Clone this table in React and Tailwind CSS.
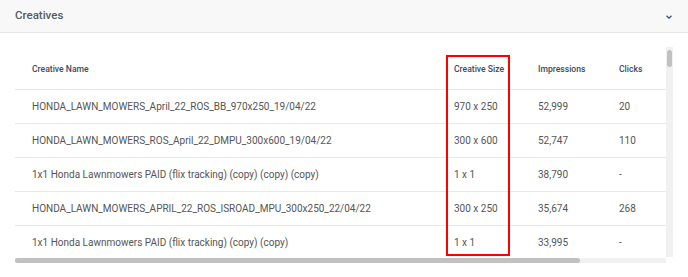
const rows = [
  { name: 'HONDA_LAWN_MOWERS_April_22_ROS_BB_970x250_19/04/22', size: '970 x 250', impressions: '52,999', clicks: '20' },
  { name: 'HONDA_LAWN_MOWERS_ROS_April_22_DMPU_300x600_19/04/22', size: '300 x 600', impressions: '52,747', clicks: '110' },
  { name: '1x1 Honda Lawnmowers PAID (flix tracking) (copy) (copy) (copy)', size: '1 x 1', impressions: '38,790', clicks: '-' },
  { name: 'HONDA_LAWN_MOWERS_APRIL_22_ROS_ISROAD_MPU_300x250_22/04/22', size: '300 x 250', impressions: '35,674', clicks: '268' },
  { name: '1x1 Honda Lawnmowers PAID (flix tracking) (copy) (copy)', size: '1 x 1', impressions: '33,995', clicks: '-' },
];

const App = () => {
  return (
    <div className="w-[688px] h-[277px] bg-white overflow-hidden font-['Roboto',sans-serif]">
      {/* Panel header */}
      <div className="h-[33px] bg-[#f8f8f8] border-b border-[#e6e6e6] flex items-center justify-between pl-[15px] pr-[16px]">
        <span className="text-[11.5px] font-medium text-[#555b63]">Creatives</span>
        <svg width="6" height="4" viewBox="0 0 6 4" className="mt-[1px]">
          <polyline points="0.5,0.8 3,3.2 5.5,0.8" fill="none" stroke="#3b4a7a" strokeWidth="1.2" />
        </svg>
      </div>

      <div className="pl-[15px] pt-[14px]">
        <div className="flex">
          <div className="w-[651px]">
            <div className="relative h-[210px] overflow-hidden">
              <div className="w-[750px]">
                <div className="h-[43px] flex items-center pt-[3px] border-b border-[#e8e8e8] text-[8.6px] font-medium text-[#3e4a5e]">
                  <div className="w-[439px] pl-[17px]">Creative Name</div>
                  <div className="w-[84px]">Creative Size</div>
                  <div className="w-[81px]">Impressions</div>
                  <div className="w-[146px]">Clicks</div>
                </div>
                {rows.map((r, i) => (
                  <div key={i} className="h-[34px] flex items-center border-b border-[#e8e8e8] text-[10px] text-[#555]">
                    <div className="w-[439px] pl-[17px] whitespace-nowrap">{r.name}</div>
                    <div className="w-[84px]">{r.size}</div>
                    <div className="w-[81px]">{r.impressions}</div>
                    <div className="w-[146px]">{r.clicks}</div>
                  </div>
                ))}
              </div>
              {/* highlight annotation */}
              <div className="absolute left-[431px] top-[8px] w-[64px] h-[201px] border-2 border-[#ff0000]" />
            </div>
            {/* horizontal scrollbar */}
            <div className="mt-[1px] h-[5px] bg-[#f1f1f1]">
              <div className="w-[565px] h-full rounded-full bg-[#c1c1c1]" />
            </div>
          </div>
          {/* vertical scrollbar */}
          <div className="w-[7px] h-[210px] bg-[#f1f1f1] pt-[3px]">
            <div className="mx-auto w-[5px] h-[17px] rounded-full bg-[#c1c1c1]" />
          </div>
        </div>
      </div>
    </div>
  );
};

export default App;
